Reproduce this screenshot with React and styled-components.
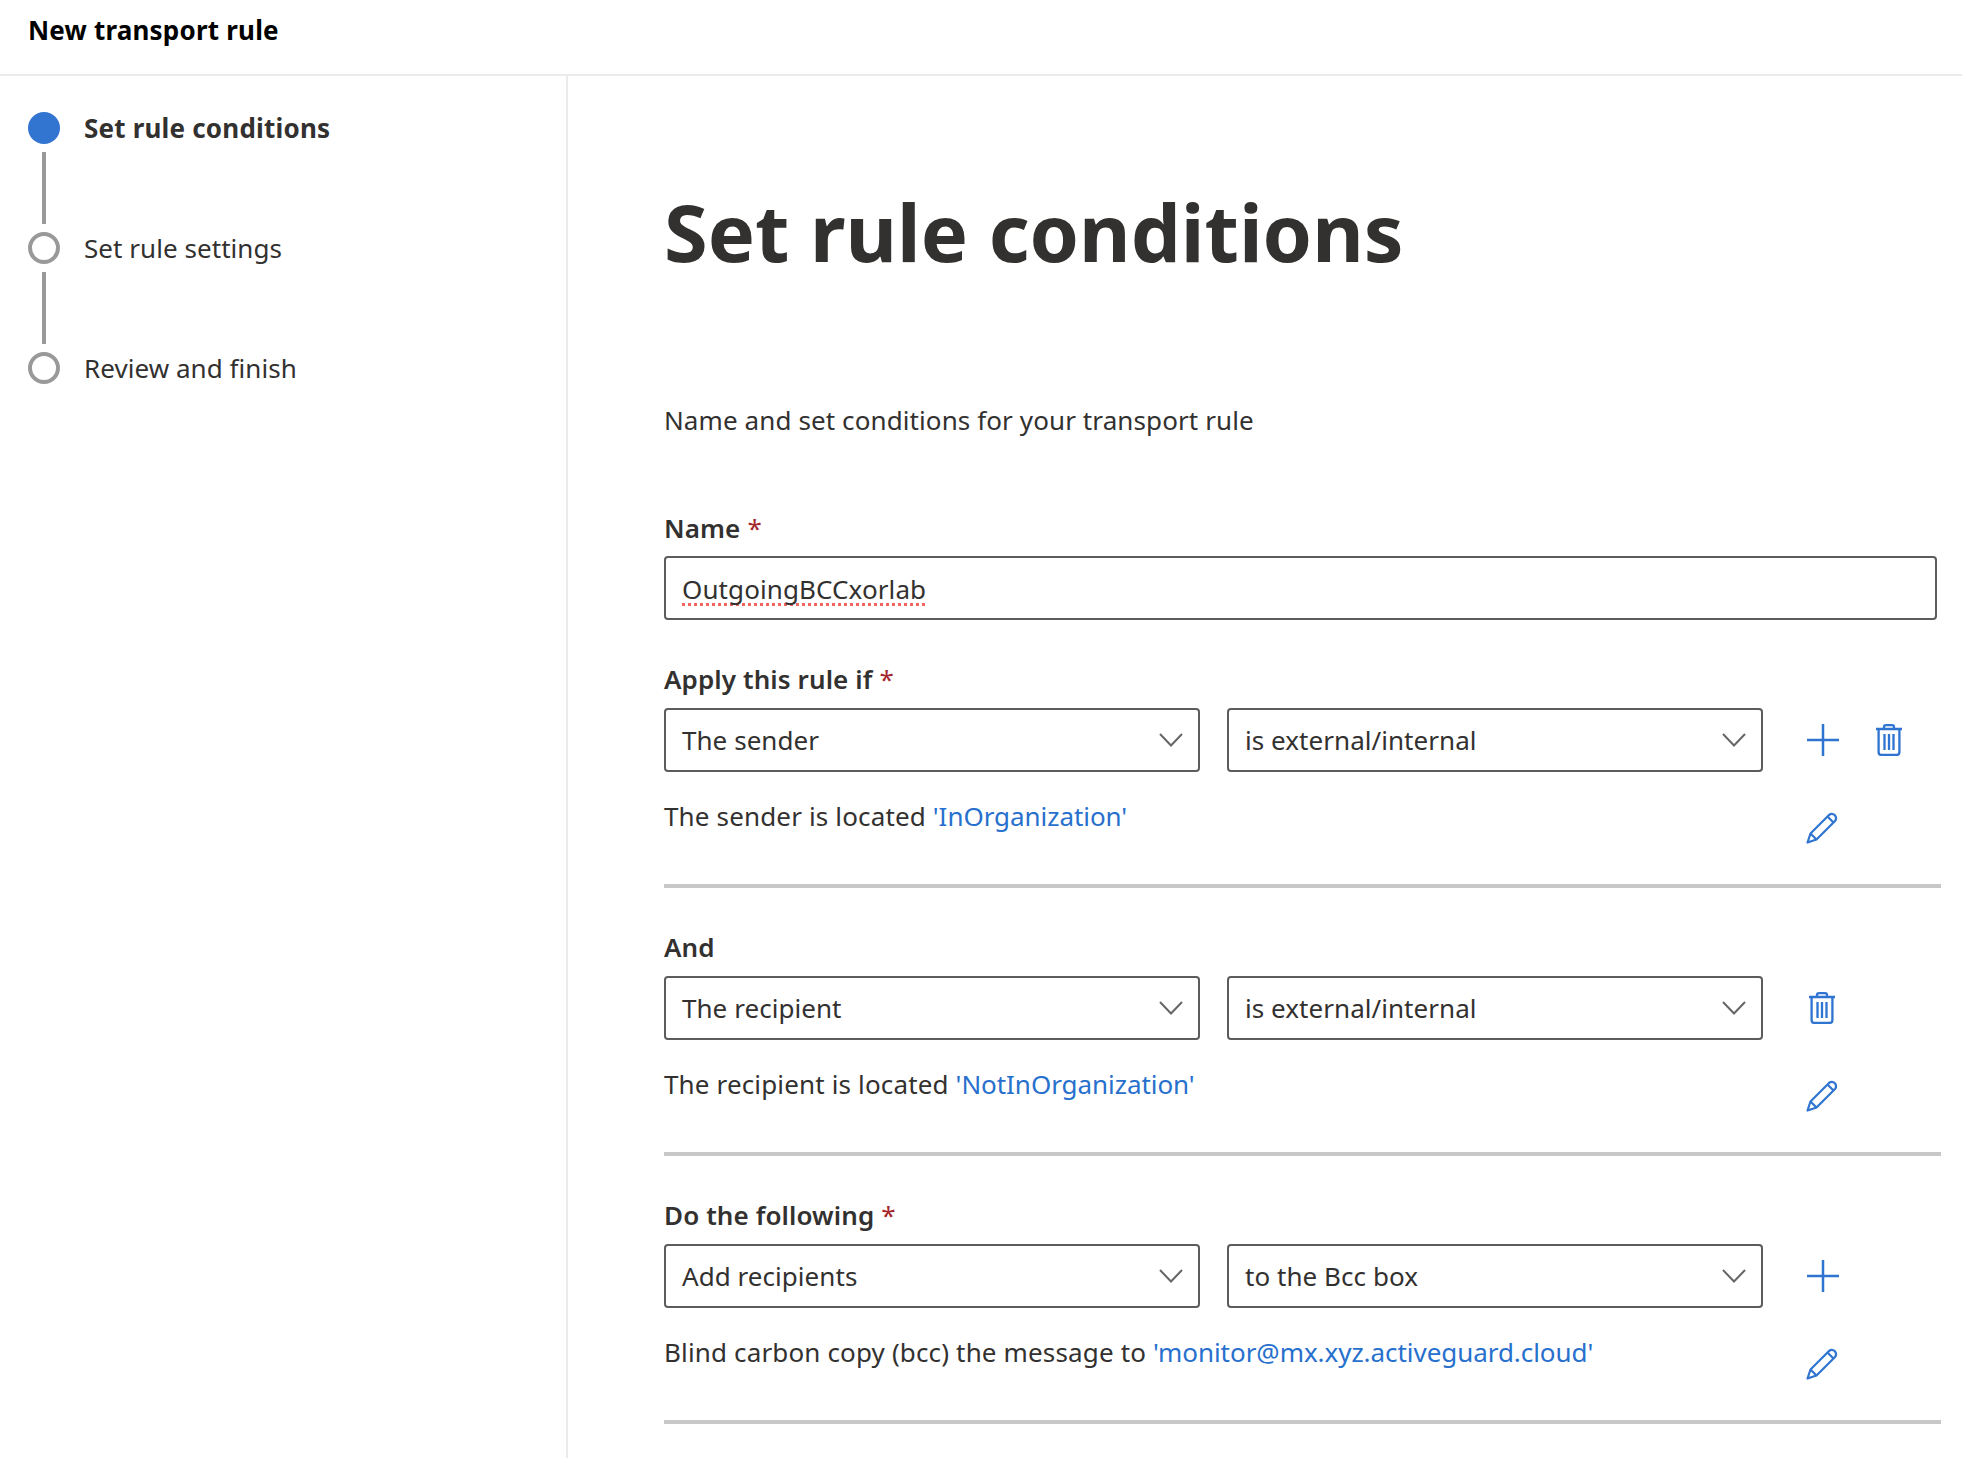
import styled, { createGlobalStyle } from 'styled-components'

const GlobalStyle = createGlobalStyle`
  html, body {
    margin: 0;
    padding: 0;
    background: #fff;
  }
  body {
    font-family: "Noto Sans", "Open Sans", sans-serif;
    color: #323130;
  }
`

const Page = styled.div`
  width: 1962px;
  height: 1458px;
  overflow: hidden;
  display: flex;
  flex-direction: column;
`

const Header = styled.header`
  height: 74px;
  flex: none;
  border-bottom: 2px solid #edebe9;
  padding-left: 28px;
  display: flex;
  align-items: center;
  font-size: 26px;
  font-weight: 700;
  letter-spacing: 0.2px;
  color: #000;

  & span {
    margin-top: -15px;
  }
`

const Body = styled.div`
  flex: 1;
  display: flex;
  min-height: 0;
`

const Sidebar = styled.nav`
  width: 538px;
  flex: none;
  border-right: 2px solid #edebe9;
  padding: 36px 0 0 28px;
`

const Step = styled.div`
  display: flex;
  align-items: center;
  gap: 24px;
  height: 32px;
  font-size: 26px;
  font-weight: ${({ $active }) => ($active ? 700 : 400)};
  letter-spacing: ${({ $active }) => ($active ? '0.2px' : '0.05px')};
`

const Dot = styled.span`
  width: 32px;
  height: 32px;
  box-sizing: border-box;
  border-radius: 50%;
  flex: none;
  background: ${({ $active }) => ($active ? '#3275d1' : '#fff')};
  border: ${({ $active }) => ($active ? 'none' : '4px solid #999')};
`

const Connector = styled.div`
  width: 4px;
  height: 72px;
  margin: 8px 0 8px 14px;
  background: #999;
`

const Main = styled.main`
  flex: 1;
  padding: 0 21px 0 96px;
  min-width: 0;
`

const Heading = styled.h1`
  margin: 0;
  padding-top: 95px;
  font-size: 79.3px;
  line-height: 120px;
  font-weight: 700;
`

const Intro = styled.p`
  margin: 113px 0 0;
  font-size: 26px;
  line-height: 32px;
  letter-spacing: 0.1px;
`

const Label = styled.div`
  font-size: 26px;
  font-weight: 600;
  line-height: 32px;
  letter-spacing: 0.1px;
  margin-bottom: 13px;

  & em {
    font-style: normal;
    font-weight: 400;
    color: #a4262c;
    margin-left: 7px;
  }
`

const NameField = styled.section`
  margin-top: 76px;
  margin-right: 4px;
`

const TextBox = styled.div`
  height: 64px;
  box-sizing: border-box;
  border: 2.5px solid #5c5c5c;
  border-radius: 4px;
  padding: 2px 16px 0;
  margin-top: -1px;
  display: flex;
  align-items: center;
  font-size: 26px;
  letter-spacing: 0.1px;

  & span {
    text-decoration: underline dotted #f0665f 3px;
    text-decoration-skip-ink: none;
    text-underline-offset: 4px;
  }
`

const Condition = styled.section`
  margin-top: 43px;
  border-bottom: 4px solid #c8c8c8;
`

const Fields = styled.div`
  display: grid;
  grid-template-columns: 536px 536px 1fr;
  column-gap: 27px;
  align-items: center;
`

const Select = styled.div`
  height: 64px;
  box-sizing: border-box;
  border: 2.5px solid #5c5c5c;
  border-radius: 4px;
  padding: 0 15px 0 16px;
  display: flex;
  align-items: center;
  justify-content: space-between;
  font-size: 26px;
  letter-spacing: 0.05px;
`

const Actions = styled.div`
  display: flex;
  gap: 5px;
  margin-left: 1px;
`

const ActionSlot = styled.button`
  width: 62px;
  height: 34px;
  padding: 0;
  border: 0;
  background: none;
  display: flex;
  align-items: center;
  justify-content: center;
  color: #2f74d0;
`

const Summary = styled.div`
  display: grid;
  grid-template-columns: 1100px 1fr;
  height: 112px;
  column-gap: 27px;
`

const SummaryText = styled.p`
  margin: 29px 0 0;
  font-size: 26px;
  line-height: 30px;
  letter-spacing: 0.15px;

  & a {
    color: #2870cd;
    text-decoration: none;
    letter-spacing: -0.05px;
  }
`

const PencilSlot = styled(ActionSlot)`
  margin-top: 39px;
`

const PlusIcon = () => (
  <svg width="34" height="32" viewBox="-2 0 34 32" fill="none" stroke="currentColor" strokeWidth="2.5">
    <path d="M16 0V32M0 16H32" />
  </svg>
)

const TrashIcon = () => (
  <svg width="26" height="32" viewBox="0 0 26 32" fill="none" stroke="currentColor" strokeWidth="2.3">
    <path d="M0 5H26M8 5V3Q8 1.2 10 1.2H16Q18 1.2 18 3V5" />
    <path d="M2.6 5V28Q2.6 31 5.6 31H20.4Q23.4 31 23.4 28V5" />
    <path d="M8.5 10V26M13 10V26M17.5 10V26" />
  </svg>
)

const PencilIcon = () => (
  <svg width="32" height="32" viewBox="0 0 32 32" fill="none" stroke="currentColor" strokeWidth="2.2" strokeLinejoin="round">
    <path d="M1.5 30.5L4.5 21.5L23 3Q26 0.8 28.8 3.2Q31.2 6 29 9L10.5 27.5Z" />
    <path d="M21.5 4.5L27.5 10.5M4.5 21.5L10.5 27.5" />
  </svg>
)

const ChevronIcon = () => (
  <svg width="24" height="14" viewBox="0 0 24 14" fill="none" stroke="#666" strokeWidth="2">
    <path d="M1 1L12 12.5L23 1" />
  </svg>
)

const conditions = [
  {
    label: 'Apply this rule if',
    required: true,
    subject: 'The sender',
    predicate: 'is external/internal',
    text: 'The sender is located ',
    value: "'InOrganization'",
    actions: ['add', 'remove'],
  },
  {
    label: 'And',
    subject: 'The recipient',
    predicate: 'is external/internal',
    text: 'The recipient is located ',
    value: "'NotInOrganization'",
    actions: ['remove'],
  },
  {
    label: 'Do the following',
    required: true,
    subject: 'Add recipients',
    predicate: 'to the Bcc box',
    text: 'Blind carbon copy (bcc) the message to ',
    value: "'monitor@mx.xyz.activeguard.cloud'",
    actions: ['add'],
  },
]

const steps = ['Set rule conditions', 'Set rule settings', 'Review and finish']

export default function App() {
  return (
    <Page>
      <GlobalStyle />
      <Header>
        <span>New transport rule</span>
      </Header>
      <Body>
        <Sidebar>
          {steps.map((step, i) => (
            <div key={step}>
              <Step $active={i === 0}>
                <Dot $active={i === 0} />
                {step}
              </Step>
              {i < steps.length - 1 && <Connector />}
            </div>
          ))}
        </Sidebar>
        <Main>
          <Heading>Set rule conditions</Heading>
          <Intro>Name and set conditions for your transport rule</Intro>
          <NameField>
            <Label>
              Name<em>*</em>
            </Label>
            <TextBox>
              <span>OutgoingBCCxorlab</span>
            </TextBox>
          </NameField>
          {conditions.map((c) => (
            <Condition key={c.label}>
              <Label>
                {c.label}
                {c.required && <em>*</em>}
              </Label>
              <Fields>
                <Select>
                  {c.subject}
                  <ChevronIcon />
                </Select>
                <Select>
                  {c.predicate}
                  <ChevronIcon />
                </Select>
                <Actions>
                  {c.actions.map((a) => (
                    <ActionSlot key={a}>{a === 'add' ? <PlusIcon /> : <TrashIcon />}</ActionSlot>
                  ))}
                </Actions>
              </Fields>
              <Summary>
                <SummaryText>
                  {c.text}
                  <a href="#">{c.value}</a>
                </SummaryText>
                <PencilSlot>
                  <PencilIcon />
                </PencilSlot>
              </Summary>
            </Condition>
          ))}
        </Main>
      </Body>
    </Page>
  )
}
